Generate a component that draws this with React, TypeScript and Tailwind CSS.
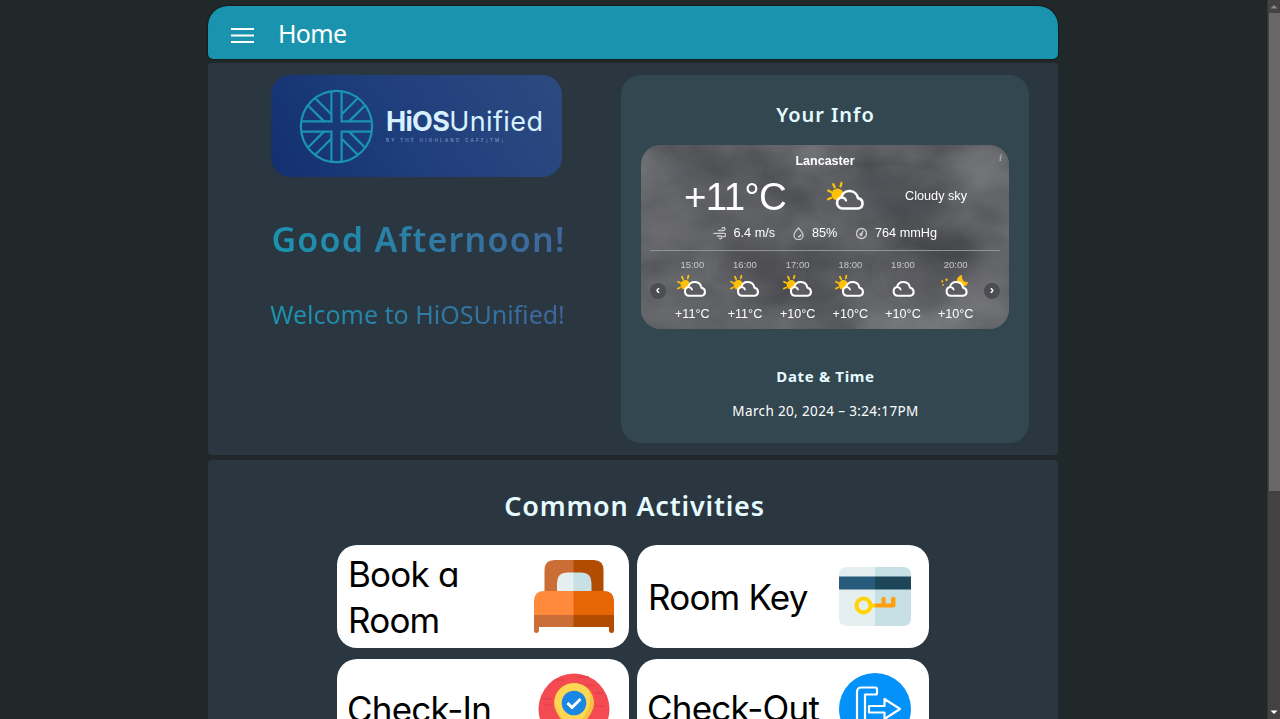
import React from "react";

const teal = "#1a94af";

function Logo() {
  return (
    <div className="flex h-[102px] w-[291px] items-center rounded-[20px] bg-[linear-gradient(60deg,#12306f_0%,#1f3e7c_45%,#2d4a80_100%)] pl-[28px]">
      <svg width="75" height="75" viewBox="0 0 75 75" fill="none" stroke={teal} strokeWidth="2.2" className="shrink-0">
        <circle cx="37.5" cy="37.5" r="35.6" />
        <path d="M32.4 2.5V32.4H2.5M42.6 2.5V32.4H72.5M32.4 72.5V42.6H2.5M42.6 72.5V42.6H72.5" />
        <path d="M16.5 9.5L32 25M9.5 17L25 32.4M58.5 9.5L43 25M65.5 17L50 32.4M16.5 65.5L32 50M9.5 58L25 42.6M58.5 65.5L43 50M65.5 58L50 42.6" />
      </svg>
      <div className="ml-[12px] mt-[-2px] flex flex-col whitespace-nowrap text-[#d8f1ff]">
        <div className="font-['Inter',sans-serif] text-[27px] leading-[32px]">
          <span className="font-bold tracking-[-0.7px]">HiOS</span>
          <span className="tracking-[0.4px]">Unified</span>
        </div>
        <div className="font-['Inter',sans-serif] text-[4.5px] leading-[6px] tracking-[2.3px] text-[#8fa6cc]">BY THE HIGHLAND CAFE(TM)</div>
      </div>
    </div>
  );
}

function Rays() {
  return (
    <>
      <circle cx="10.5" cy="12.5" r="6" fill="#ffc107" />
      <path d="M1.200 8.500l3 1.600M6.200 2.200l1.500 3M14.500 1l-.9 3.300M1 17.200l3-1.300" stroke="#ffc107" strokeWidth="2.300" strokeLinecap="round" />
    </>
  );
}

function WeatherIcon({ kind, w, h }: { kind: string; w: number; h: number }) {
  const shift = kind === "sun" ? "" : "translate(-3 0)";
  return (
    <svg width={w} height={h} viewBox="0 0 38 28" fill="none" className="overflow-visible">
      {kind === "sun" && <Rays />}
      {kind === "moon" && (
        <>
          <path d="M27 0c-1.500 5 1.500 9.500 7.500 9.200-1 3.500-3.500 5.300-6.500 5.300-4 0-7.500-2.500-8-7.500C20.500 3 23.500.5 27 0z" fill="#ffc107" />
          <g fill="#ffc107"><circle cx="1.500" cy="8" r="1.400" /><circle cx="7" cy="6" r="1.500" /><circle cx="2.500" cy="12.500" r="1.200" /></g>
        </>
      )}
      <path d="M15.500 26.500a5.700 5.700 0 0 1-1.200-11.200 8.500 8.500 0 0 1 16.600.800 5.300 5.300 0 0 1 .6 10.400z" fill="#5c5d62" stroke="#fff" strokeWidth="2.600" strokeLinejoin="round" transform={shift} />
      <path d="M14.500 15.500q3.500 0 4.500 3" stroke="#fff" strokeWidth="2.300" strokeLinecap="round" transform={shift} />
    </svg>
  );
}

const hours = [
  { t: "15:00", k: "sun", v: "+11°C" },
  { t: "16:00", k: "sun", v: "+11°C" },
  { t: "17:00", k: "sun", v: "+10°C" },
  { t: "18:00", k: "sun", v: "+10°C" },
  { t: "19:00", k: "cloud", v: "+10°C" },
  { t: "20:00", k: "moon", v: "+10°C" },
];

function Sky() {
  return (
    <svg className="absolute inset-0" width="368" height="184">
      <filter id="sky" x="0" y="0" width="100%" height="100%" colorInterpolationFilters="sRGB">
        <feTurbulence type="fractalNoise" baseFrequency="0.009 0.014" numOctaves="4" seed="21" />
        <feColorMatrix values=".3 0 0 0 .225  .3 0 0 0 .229  .3 0 0 0 .245  0 0 0 0 1" />
      </filter>
      <filter id="soft" x="-50%" y="-50%" width="200%" height="200%"><feGaussianBlur stdDeviation="12" /></filter>
      <rect width="368" height="184" filter="url(#sky)" />
      <g filter="url(#soft)">
        <ellipse cx="70" cy="25" rx="40" ry="10" fill="#4a4b50" opacity=".6" />
        <ellipse cx="115" cy="120" rx="40" ry="14" fill="#3f4045" opacity=".6" />
        <ellipse cx="245" cy="55" rx="60" ry="16" fill="#48494e" opacity=".5" />
        <ellipse cx="270" cy="130" rx="30" ry="12" fill="#424348" opacity=".5" />
        <ellipse cx="25" cy="85" rx="30" ry="16" fill="#84858a" opacity=".4" />
        <ellipse cx="340" cy="135" rx="24" ry="16" fill="#8b8c91" opacity=".45" />
      </g>
    </svg>
  );
}

function Weather() {
  return (
    <div className="relative h-[184px] w-[368px] overflow-hidden rounded-[20px] bg-[#626368] font-['Liberation_Sans',sans-serif] text-white">
      <Sky />
      <div className="relative flex flex-col">
        <div className="mt-[8px] text-center text-[12.500px] font-bold leading-[16px]">Lancaster</div>
        <div className="absolute right-[7px] top-[5px] font-['Liberation_Serif',serif] text-[11px] font-bold italic leading-[14px] text-[#a6a7aa]">i</div>
        <div className="flex h-[56px] items-center pl-[43px]">
          <div className="w-[143px] text-[38.500px] leading-[56px] tracking-[-0.7px]">+11°C</div>
          <div className="mt-[-2px] w-[78px]"><WeatherIcon kind="sun" w={38} h={28} /></div>
          <div className="text-[12.700px]">Cloudy sky</div>
        </div>
        <div className="flex h-[16px] items-center pl-[72px] text-[12.700px] leading-[16px]">
          <div className="flex w-[79px] items-center gap-[7.500px]">
            <svg width="13" height="13" viewBox="0 0 13 13" fill="none" stroke="#d0d0d2" strokeWidth="1.300" strokeLinecap="round"><path d="M5.500 3.500h5a1.500 1.500 0 1 0-1.300-2.300M1 6.300h10a1.700 1.700 0 1 1-1 3M4.500 9h3a1.400 1.400 0 1 1-1 2.500" /></svg>
            <span>6.4 m/s</span>
          </div>
          <div className="flex w-[63px] items-center gap-[7px]">
            <svg width="13" height="13" viewBox="0 0 13 13" fill="none" stroke="#d0d0d2" strokeWidth="1.300"><path d="M6.500 1C9 4 11 6 11 8.200a4.400 4.400 0 0 1-9 0C2 6 4 4 6.500 1zM6 10q2.500-.3 3-2.500" /></svg>
            <span>85%</span>
          </div>
          <div className="flex items-center gap-[7px]">
            <svg width="13" height="13" viewBox="0 0 13 13" fill="none" stroke="#d0d0d2" strokeWidth="1.300"><circle cx="6.500" cy="6.500" r="5" /><circle cx="6" cy="7.500" r="1" /><path d="M6.800 6.800L8 3.800" /></svg>
            <span>764 mmHg</span>
          </div>
        </div>
        <div className="mx-[9px] mt-[9px] h-px bg-[#929396]" />
        <div className="flex items-center pt-[7px]">
          <div className="ml-[9px] mt-[2px] flex size-[16px] items-center justify-center rounded-full bg-[#4c4d52] pb-[2px] text-[13px] font-bold leading-[14px]">‹</div>
          <div className="flex w-[316px] justify-between">
            {hours.map((h) => (
              <div key={h.t} className="flex w-[52.600px] flex-col items-center whitespace-nowrap">
                <div className="text-[9.500px] leading-[14px] text-[#c8c8ca]">{h.t}</div>
                <div className="mt-[3px] h-[24px]"><WeatherIcon kind={h.k} w={30} h={22} /></div>
                <div className="mt-[7px] text-[12.600px] leading-[16px]">{h.v}</div>
              </div>
            ))}
          </div>
          <div className="ml-[2px] mt-[2px] flex size-[16px] items-center justify-center rounded-full bg-[#4c4d52] pb-[2px] text-[13px] font-bold leading-[14px]">›</div>
        </div>
      </div>
    </div>
  );
}

function Bed() {
  return (
    <svg width="80" height="74" viewBox="0 0 80 74" className="shrink-0">
      <path d="M10.500 34V10Q10.500 0 20.500 0H40V34z" fill="#cb6d37" />
      <path d="M39.500 0H59.500Q69.500 0 69.500 10V34H39.500z" fill="#b14c00" />
      <path d="M23 32V23Q23 12.500 33 12.500H40V32z" fill="#e6efef" />
      <path d="M39.500 12.500H47.500Q57.500 12.500 57.500 23V32H39.500z" fill="#c6e0e6" />
      <path d="M0 56V40Q1 31 10 31H40V56z" fill="#ff8a3c" />
      <path d="M39.500 31H70Q79 31 80 40V56H39.500z" fill="#e66605" />
      <path d="M0 55H40V67H5V71Q4 73 2.500 73Q0 73 0 71z" fill="#cb6d37" />
      <path d="M39.500 55H80V71Q80 73 77.500 73Q75.500 73 75 71V67H39.500z" fill="#b14c00" />
    </svg>
  );
}

function CardKey() {
  return (
    <svg width="72" height="60" viewBox="0 0 72 60" className="mt-[1px] shrink-0">
      <path d="M36 0H8Q0 0 0 8V51Q0 59 8 59H36z" fill="#e6efef" />
      <path d="M36 0H64Q72 0 72 8V51Q72 59 64 59H36z" fill="#c6e0e6" />
      <path d="M0 9.500H36V22.500H0z" fill="#275d7a" />
      <path d="M36 9.500H72V22.500H36z" fill="#1d4659" />
      <circle cx="24.500" cy="38.500" r="7" fill="none" stroke="#ffd400" strokeWidth="4" />
      <path d="M32 36.500H36V40.500H32z" fill="#ffd400" />
      <path d="M36 36.500H42.500V31Q44.500 28.500 46.500 31V36.500H52V31Q54 28.500 56.500 31V38.500Q56.500 40.500 54.500 40.500H36z" fill="#ff9f0a" />
    </svg>
  );
}

function Pin() {
  return (
    <svg width="72" height="72" viewBox="0 0 72 72" className="mb-[3px] shrink-0">
      <circle cx="36" cy="36" r="35.500" fill="#f44a52" />
      <path d="M39 4h12M17 7h9M48 12h7M4 26h9M7 32h7M57 20h8M57 33h9" stroke="#db3b48" strokeWidth="1" />
      <path d="M36 60Q16 42 16 30A20 20 0 0 1 56 30Q56 42 36 60z" fill="#f5c33f" />
      <path d="M36 57Q17 41 17 29A19 19 0 0 1 52 19Q55 36 36 57z" fill="#fcd654" />
      <circle cx="36" cy="30" r="12.300" fill="#1b87e5" />
      <path d="M29.500 30l4.500 4.500 8.500-8.500" stroke="#fff" strokeWidth="3" fill="none" />
    </svg>
  );
}

function Exit() {
  return (
    <svg width="72" height="72" viewBox="0 0 72 72" fill="none" className="mb-[3px] shrink-0">
      <circle cx="36" cy="36" r="36" fill="#0391fa" />
      <path d="M20.500 58H37V52H26V21.500H36.500Q38 21.500 38 20V16.500Q38 14.500 36.500 14.500H22.500Q18 14.500 18 19V55.500Q18 58 20.500 58zM30 33h15.500v-7L61 36 45.500 46v-6.500H30z" stroke="#fff" strokeWidth="2.200" strokeLinejoin="round" />
    </svg>
  );
}

export default function App() {
  return (
    <div className="flex h-[719px] overflow-hidden bg-[#212829] font-['Noto_Sans',sans-serif] text-white">
      <main className="ml-[208px] flex w-[850px] shrink-0 flex-col pt-[6px]">
        <header className="flex h-[53px] shrink-0 items-center rounded-b-[5px] rounded-t-[20px] bg-[#1a93ae] pl-[23px] shadow-[0_0_2px_#000]">
          <svg width="23" height="17" viewBox="0 0 23 17" className="mt-[5px]" fill="#fff"><path d="M0 1h23v2H0zM0 7.500h23v2H0zM0 14h23v2H0z" /></svg>
          <h1 className="ml-[24px] text-[25px] leading-[32px] tracking-[-0.700px]">Home</h1>
        </header>
        <section className="mt-[4px] flex h-[392px] shrink-0 rounded-[4px] bg-[#2a3740]">
          <div className="flex w-[413px] shrink-0 flex-col items-center pl-[4px] pt-[12px]">
            <Logo />
            <h2 className="ml-[4px] mt-[39px] whitespace-nowrap bg-[linear-gradient(90deg,#1a94af,#40659b)] bg-clip-text text-[34px] font-semibold leading-[46px] tracking-[1.250px] text-transparent">Good Afternoon!</h2>
            <p className="ml-[2px] mt-[34px] whitespace-nowrap bg-[linear-gradient(90deg,#1a94af,#40659b)] bg-clip-text text-[25px] font-normal leading-[36px] tracking-[0px] text-transparent">Welcome to HiOSUnified!</p>
          </div>
          <div className="mt-[12px] flex h-[368px] w-[408px] flex-col items-center rounded-[20px] bg-[#334751]">
            <h3 className="ml-[1px] mt-[26px] text-[20px] font-semibold leading-[28px] tracking-[0.950px] text-[#e6fbff]">Your Info</h3>
            <div className="mt-[16px]"><Weather /></div>
            <h4 className="ml-[1px] mt-[36px] text-[15px] font-bold leading-[22px] tracking-[0.650px] text-[#e6fbff]">Date &amp; Time</h4>
            <p className="ml-[1px] mt-[14px] text-[13.500px] leading-[20px] tracking-[0.360px]">March 20, 2024 – 3:24:17PM</p>
          </div>
        </section>
        <section className="mt-[5px] flex h-[300px] shrink-0 flex-col items-center rounded-t-[4px] bg-[#2a3740]">
          <h2 className="ml-[3px] mt-[28px] text-[27px] font-semibold leading-[36px] tracking-[0.800px] text-[#e6fbff]">Common Activities</h2>
          <div className="mt-[21px] grid grid-cols-[292px_292px] gap-x-[8px] gap-y-[11px] font-['Inter',sans-serif] text-[35px] leading-[46px] tracking-[-0.800px] text-black [font-feature-settings:'cv11'] [word-spacing:-4px]">
            <button className="flex h-[103px] items-center justify-between rounded-[20px] bg-white pl-[11px] pr-[15px] text-left">
              <span className="w-[150px]">Book a Room</span><Bed />
            </button>
            <button className="flex h-[103px] items-center justify-between whitespace-nowrap rounded-[20px] bg-white pl-[11px] pr-[18px]">
              <span>Room Key</span><CardKey />
            </button>
            <button className="flex h-[103px] items-center justify-between whitespace-nowrap rounded-[20px] bg-white pl-[10px] pr-[19px]">
              <span className="mb-[4px]">Check-In</span><Pin />
            </button>
            <button className="flex h-[103px] items-center justify-between whitespace-nowrap rounded-[20px] bg-white pl-[10px] pr-[18px]">
              <span className="mb-[5px]">Check-Out</span><Exit />
            </button>
          </div>
        </section>
      </main>
      <aside className="ml-auto flex w-[13px] flex-col items-center border-l border-[#353535] bg-[#424242]">
        <svg width="12" height="13" viewBox="0 0 12 13"><path d="M2.500 8.500L6 5l3.500 3.500z" fill="#8b8b8b" /></svg>
        <div className="h-[478px] w-[11px] bg-[#686868]" />
        <svg width="12" height="13" viewBox="0 0 12 13" className="mt-auto"><path d="M2.500 4.500L6 8l3.500-3.500z" fill="#fff" /></svg>
      </aside>
    </div>
  );
}
